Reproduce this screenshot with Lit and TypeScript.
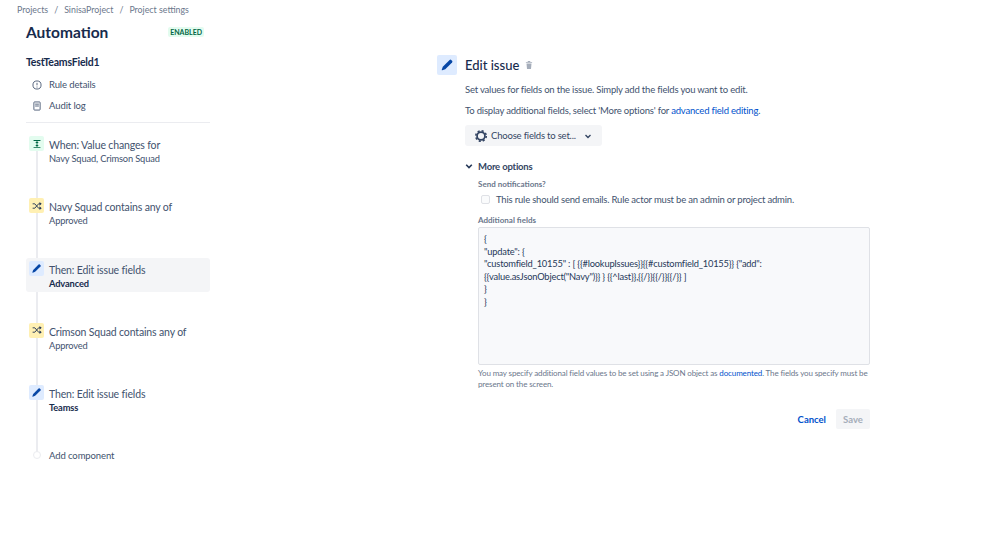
import { LitElement, html, css } from "lit";
import { customElement } from "lit/decorators.js";

const pencil = (s: number) => html`<svg width=${s} height=${s} viewBox="0 0 16 16"><path fill="#0747a6" d="M11 2.2a1.3 1.3 0 0 1 1.8 0l1 1a1.3 1.3 0 0 1 0 1.8L6 12.8 2.6 14c-.4.1-.7-.2-.6-.6L3.200 10z"/></svg>`;
const branch = html`<svg width="10" height="10" viewBox="0 0 16 16" fill="none" stroke="#253858" stroke-width="1.500"><path d="M1 4.500h3.500l6 7H13M1 11.500h3.500l6-7H13"/><path fill="#253858" stroke="none" d="M12 1.500l3.500 3-3.500 3zM12 8.500l3.500 3-3.500 3z"/></svg>`;
const trigger = html`<svg width="10" height="10" viewBox="0 0 16 16" fill="#006644"><path d="M2.500 1.500h11v1.500h-11zM2.500 13h11v1.500h-11z"/><path d="M7.300 4h1.400v8H7.300z"/><path d="M5.200 6.500L8 3.700l2.800 2.800zM5.200 9.500L8 12.300l2.800-2.800z"/></svg>`;

@customElement("app-root")
export class AppRoot extends LitElement {
  static styles = css`
    :host { display: block; width: 999px; height: 536px; overflow: hidden; background: #fff; font-family: "Lato", "Noto Sans", sans-serif; color: #42526e; font-size: 10px; }
    .page { display: grid; grid-template-columns: 437px 433px; }
    .crumbs { display: flex; gap: 6px; padding: 4px 0 0 17px; height: 12px; line-height: 12px; color: #6b778c; font-size: 8.800px; }
    .side { padding-left: 26px; width: 184px; }
    .head { display: flex; justify-content: space-between; align-items: center; margin-top: 5px; height: 22px; padding-right: 6px; }
    h1 { margin: 0; font-size: 15.500px; font-weight: 700; color: #172b4d; line-height: 22px; }
    .loz { background: #e3fcef; color: #006644; font-size: 7px; font-weight: 700; padding: 0 2px; height: 10px; line-height: 10px; border-radius: 2px; }
    h2 { margin: 12px 0 0; font-size: 10.500px; letter-spacing: -0.2px; font-weight: 700; color: #172b4d; line-height: 14px; }
    .nav { display: flex; align-items: center; height: 21px; gap: 7px; padding-left: 6px; font-size: 9.500px; letter-spacing: -0.1px; }
    .nav svg { flex: none; width: 10px; height: 10px; }
    .navs { margin-top: 5px; padding-bottom: 6px; border-bottom: 1px solid #ebecf0; }
    .steps { position: relative; margin-top: 12px; }
    .line { position: absolute; left: 10px; top: 6px; bottom: 4px; width: 2px; background: #ebecf0; }
    .step { position: relative; display: flex; gap: 5px; height: 34px; padding: 0 3px; margin-bottom: 28.250px; border-radius: 3px; align-items: flex-start; }
    .step.sel { background: #f4f5f7; height: 32px; margin: -2px 0 30.250px; padding-top: 2px; }
    .ic { flex: none; width: 15px; height: 15px; border-radius: 2px; display: flex; align-items: center; justify-content: center; margin-top: 1px; }
    .g { background: #e3fcef; } .y { background: #fff0b3; } .b { background: #deebff; }
    .t1 { font-size: 10.500px; letter-spacing: -0.15px; line-height: 14px; margin-top: 3px; }
    .t2 { font-size: 9.300px; letter-spacing: -0.15px; line-height: 14px; }
    .t2.bold { font-weight: 700; color: #172b4d; }
    .add { display: flex; gap: 8px; align-items: center; padding: 2px 0 0 7px; height: 14px; font-size: 9.500px; letter-spacing: -0.1px; position: relative; }
    .dot { width: 6px; height: 6px; border: 1px solid #ebecf0; background: #fff; border-radius: 50%; }
    .main { padding-top: 38px; }
    .title { display: flex; align-items: center; gap: 8px; height: 21px; }
    .big { width: 20px; height: 20px; background: #deebff; border-radius: 2px; display: flex; align-items: center; justify-content: center; }
    .title span { font-size: 13px; font-weight: 500; color: #172b4d; }
    .trash { margin-left: -3px; }
    .body { padding-left: 28px; letter-spacing: -0.19px; }
    .p { font-size: 9.500px; line-height: 13px; margin-top: 8px; }
    .p + .p { margin-top: 8px; }
    a { color: #0052cc; text-decoration: none; }
    .btn { display: inline-flex; align-items: center; gap: 3px; height: 21px; background: #f4f5f7; border-radius: 3px; padding: 0 9px; margin-top: 8px; color: #344563; font-size: 9.500px; }
    .more { display: flex; align-items: center; gap: 5px; margin-top: 13px; height: 14px; color: #344563; font-size: 9.500px; font-weight: 700; }
    .in { padding-left: 13px; }
    .lab { font-size: 8px; letter-spacing: 0; font-weight: 700; color: #6b778c; line-height: 10px; }
    .lab.first { margin-top: 6px; }
    .lab.second { margin-top: 9px; }
    .chk { display: flex; align-items: center; gap: 6px; padding-left: 3px; margin-top: 4px; height: 13px; font-size: 9.500px; }
    .box { width: 7px; height: 7px; border: 1px solid #dfe1e6; background: #fafbfc; border-radius: 2px; }
    .ta { box-sizing: border-box; width: 392px; height: 138px; background: #f8f9fb; border: 1px solid #dfe1e6; border-radius: 2px; padding: 5px 5px; margin-top: 2px; font-size: 9.300px; line-height: 12.600px; color: #253858; white-space: pre-wrap; }
    .help { font-size: 8px; letter-spacing: -0.13px; line-height: 10.500px; color: #6b778c; margin-top: 3px; width: 392px; }
    .acts { display: flex; justify-content: flex-end; align-items: center; gap: 10px; width: 392px; margin-top: 20px; letter-spacing: 0; }
    .cancel { font-size: 9.500px; font-weight: 700; color: #0052cc; }
    .save { width: 34px; height: 20px; background: #f4f5f7; color: #a5adba; border-radius: 2px; display: flex; align-items: center; justify-content: center; font-size: 9.500px; font-weight: 700; }
  `;

  private step(icon: unknown, cls: string, a: string, b: string, bold = false, sel = false) {
    return html`<div class="step ${sel ? "sel" : ""}"><div class="ic ${cls}">${icon}</div><div><div class="t1">${a}</div><div class="t2 ${bold ? "bold" : ""}">${b}</div></div></div>`;
  }

  render() {
    return html`
      <div class="crumbs"><span>Projects</span><span>/</span><span>SinisaProject</span><span>/</span><span>Project settings</span></div>
      <div class="page">
        <div class="side">
          <div class="head"><h1>Automation</h1><span class="loz">ENABLED</span></div>
          <h2>TestTeamsField1</h2>
          <div class="navs">
            <div class="nav"><svg viewBox="0 0 16 16" fill="none" stroke="#42526e" stroke-width="1.400"><circle cx="8" cy="8" r="6.500"/><path d="M8 4.500v4M8 10.500v1.500"/></svg>Rule details</div>
            <div class="nav"><svg viewBox="0 0 16 16" fill="none" stroke="#42526e" stroke-width="1.400"><rect x="3" y="1.500" width="10" height="13" rx="1"/><path d="M5 5h6M5 8h6" /></svg>Audit log</div>
          </div>
          <div class="steps">
            <div class="line"></div>
            ${this.step(trigger, "g", "When: Value changes for", "Navy Squad, Crimson Squad")}
            ${this.step(branch, "y", "Navy Squad contains any of", "Approved")}
            ${this.step(pencil(11), "b", "Then: Edit issue fields", "Advanced", true, true)}
            ${this.step(branch, "y", "Crimson Squad contains any of", "Approved")}
            ${this.step(pencil(11), "b", "Then: Edit issue fields", "Teamss", true)}
            <div class="add"><span class="dot"></span>Add component</div>
          </div>
        </div>
        <div class="main">
          <div class="title"><div class="big">${pencil(14)}</div><span>Edit issue</span>
            <svg class="trash" width="10" height="10" viewBox="0 0 16 16" fill="#a5adba"><path d="M3 3h10v1.500H3zM6 1.500h4V3H6zM4 5.500h8l-.8 9H4.800z"/></svg></div>
          <div class="body">
            <div class="p">Set values for fields on the issue. Simply add the fields you want to edit.</div>
            <div class="p">To display additional fields, select 'More options' for <a>advanced field editing</a>.</div>
            <div class="btn">
              <svg width="14" height="14" viewBox="0 0 16 16" fill="none" stroke="#344563"><circle cx="8" cy="8" r="4.500" stroke-width="2"/><circle cx="8" cy="8" r="6" stroke-width="1.800" stroke-dasharray="2.400 2.310"/></svg>
              <span>Choose fields to set...</span>
              <svg width="10" height="10" viewBox="0 0 10 10" fill="none" stroke="#344563" stroke-width="1.400" style="margin-left:4px"><path d="M2.500 4l2.500 2.500L7.500 4"/></svg>
            </div>
            <div class="more"><svg width="8" height="8" viewBox="0 0 10 10" fill="none" stroke="#253858" stroke-width="2"><path d="M1.500 3.500L5 7l3.500-3.500"/></svg>More options</div>
            <div class="in">
              <div class="lab first">Send notifications?</div>
              <div class="chk"><span class="box"></span>This rule should send emails. Rule actor must be an admin or project admin.</div>
              <div class="lab second">Additional fields</div>
              <div class="ta">{
"update": {
"customfield_10155" : [ {{#lookupIssues}}{{#customfield_10155}} {"add":
{{value.asJsonObject("Navy")}} } {{^last}},{{/}}{{/}}{{/}} ]
}
}</div>
              <div class="help">You may specify additional field values to be set using a JSON object as <a>documented</a>. The fields you specify must be present on the screen.</div>
              <div class="acts"><span class="cancel">Cancel</span><span class="save">Save</span></div>
            </div>
          </div>
        </div>
      </div>
    `;
  }
}
